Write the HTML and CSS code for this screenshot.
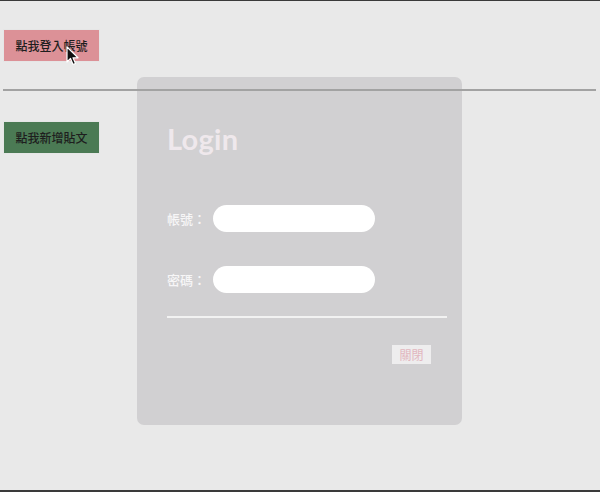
FILE: index.html
```html
<!DOCTYPE html>
<html lang="zh-Hant">
<head>
<meta charset="utf-8">
<title>Login</title>
<link rel="stylesheet" href="styles.css">
</head>
<body>
<div class="page">
  <div class="actions">
    <button class="btn btn-login">點我登入帳號</button>
    <hr class="divider">
    <button class="btn btn-post">點我新增貼文</button>
  </div>

  <div class="modal">
    <h1 class="modal-title">Login</h1>
    <div class="field">
      <label class="field-label">帳號：</label>
      <input class="field-input" type="text">
    </div>
    <div class="field">
      <label class="field-label">密碼：</label>
      <input class="field-input" type="password">
    </div>
    <hr class="modal-line">
    <div class="modal-footer">
      <button class="btn-close">關閉</button>
    </div>
  </div>

  <svg class="cursor" width="14" height="20" viewBox="0 0 14 20">
    <path d="M1 1 L1 16 L4.5 12.5 L7 18.5 L9.5 17.5 L7 11.8 L12 11.8 Z" fill="#111" stroke="#fff" stroke-width="1.2" stroke-linejoin="round"/>
  </svg>
</div>
</body>
</html>
```

FILE: styles.css
```css
html, body {
  margin: 0;
  padding: 0;
}
body {
  background: #e9e9e9;
  font-family: "Noto Sans CJK TC", "Noto Sans", sans-serif;
}
.page {
  position: relative;
  width: 600px;
  height: 492px;
  box-sizing: border-box;
  border-top: 1px solid #3a3a3a;
  border-bottom: 2px solid #3a3a3a;
  overflow: hidden;
}
.actions {
  display: flex;
  flex-direction: column;
  align-items: flex-start;
  padding: 28px 4px 0 3px;
}
.btn {
  width: 97px;
  height: 33px;
  border: 1px solid #e6e6e6;
  font-family: "Noto Sans CJK TC", sans-serif;
  font-weight: 500;
  font-size: 12px;
  color: #1e1e1e;
  padding: 0;
  line-height: 31px;
}
.btn-login {
  background: #dc9197;
}
.btn-post {
  background: #4b7a54;
}
.divider {
  position: relative;
  z-index: 2;
  align-self: stretch;
  margin: 27px 0 30px;
  border: 0;
  height: 2px;
  background: #a2a2a2;
}
.modal {
  position: absolute;
  left: 137px;
  top: 76px;
  width: 325px;
  height: 348px;
  box-sizing: border-box;
  background: #d1d0d2;
  border-radius: 7px;
  padding: 44px 15px 0 30px;
  z-index: 1;
}
.modal-title {
  margin: 0 0 48px;
  font-family: "Lato", sans-serif;
  font-weight: 700;
  font-size: 29px;
  line-height: 36px;
  letter-spacing: 0.3px;
  color: #efe8ec;
}
.field {
  display: flex;
  align-items: center;
  margin-bottom: 34px;
}
.field-label {
  font-size: 13px;
  font-weight: 500;
  color: #f7f6f7;
  width: 46px;
}
.field-input {
  width: 162px;
  height: 27px;
  box-sizing: border-box;
  border: 0;
  border-radius: 14px;
  background: #ffffff;
}
.modal-line {
  margin: -11px 0 0;
  border: 0;
  height: 2px;
  background: #f2f2f2;
}
.modal-footer {
  display: flex;
  justify-content: flex-end;
  padding: 27px 16px 0 0;
}
.btn-close {
  width: 39px;
  height: 19px;
  padding: 0;
  border: 0;
  background: #eeedee;
  font-family: "Noto Sans CJK TC", sans-serif;
  font-size: 12px;
  line-height: 19px;
  color: #e2b6be;
}
.cursor {
  position: absolute;
  left: 66px;
  top: 45px;
  z-index: 3;
}
```
